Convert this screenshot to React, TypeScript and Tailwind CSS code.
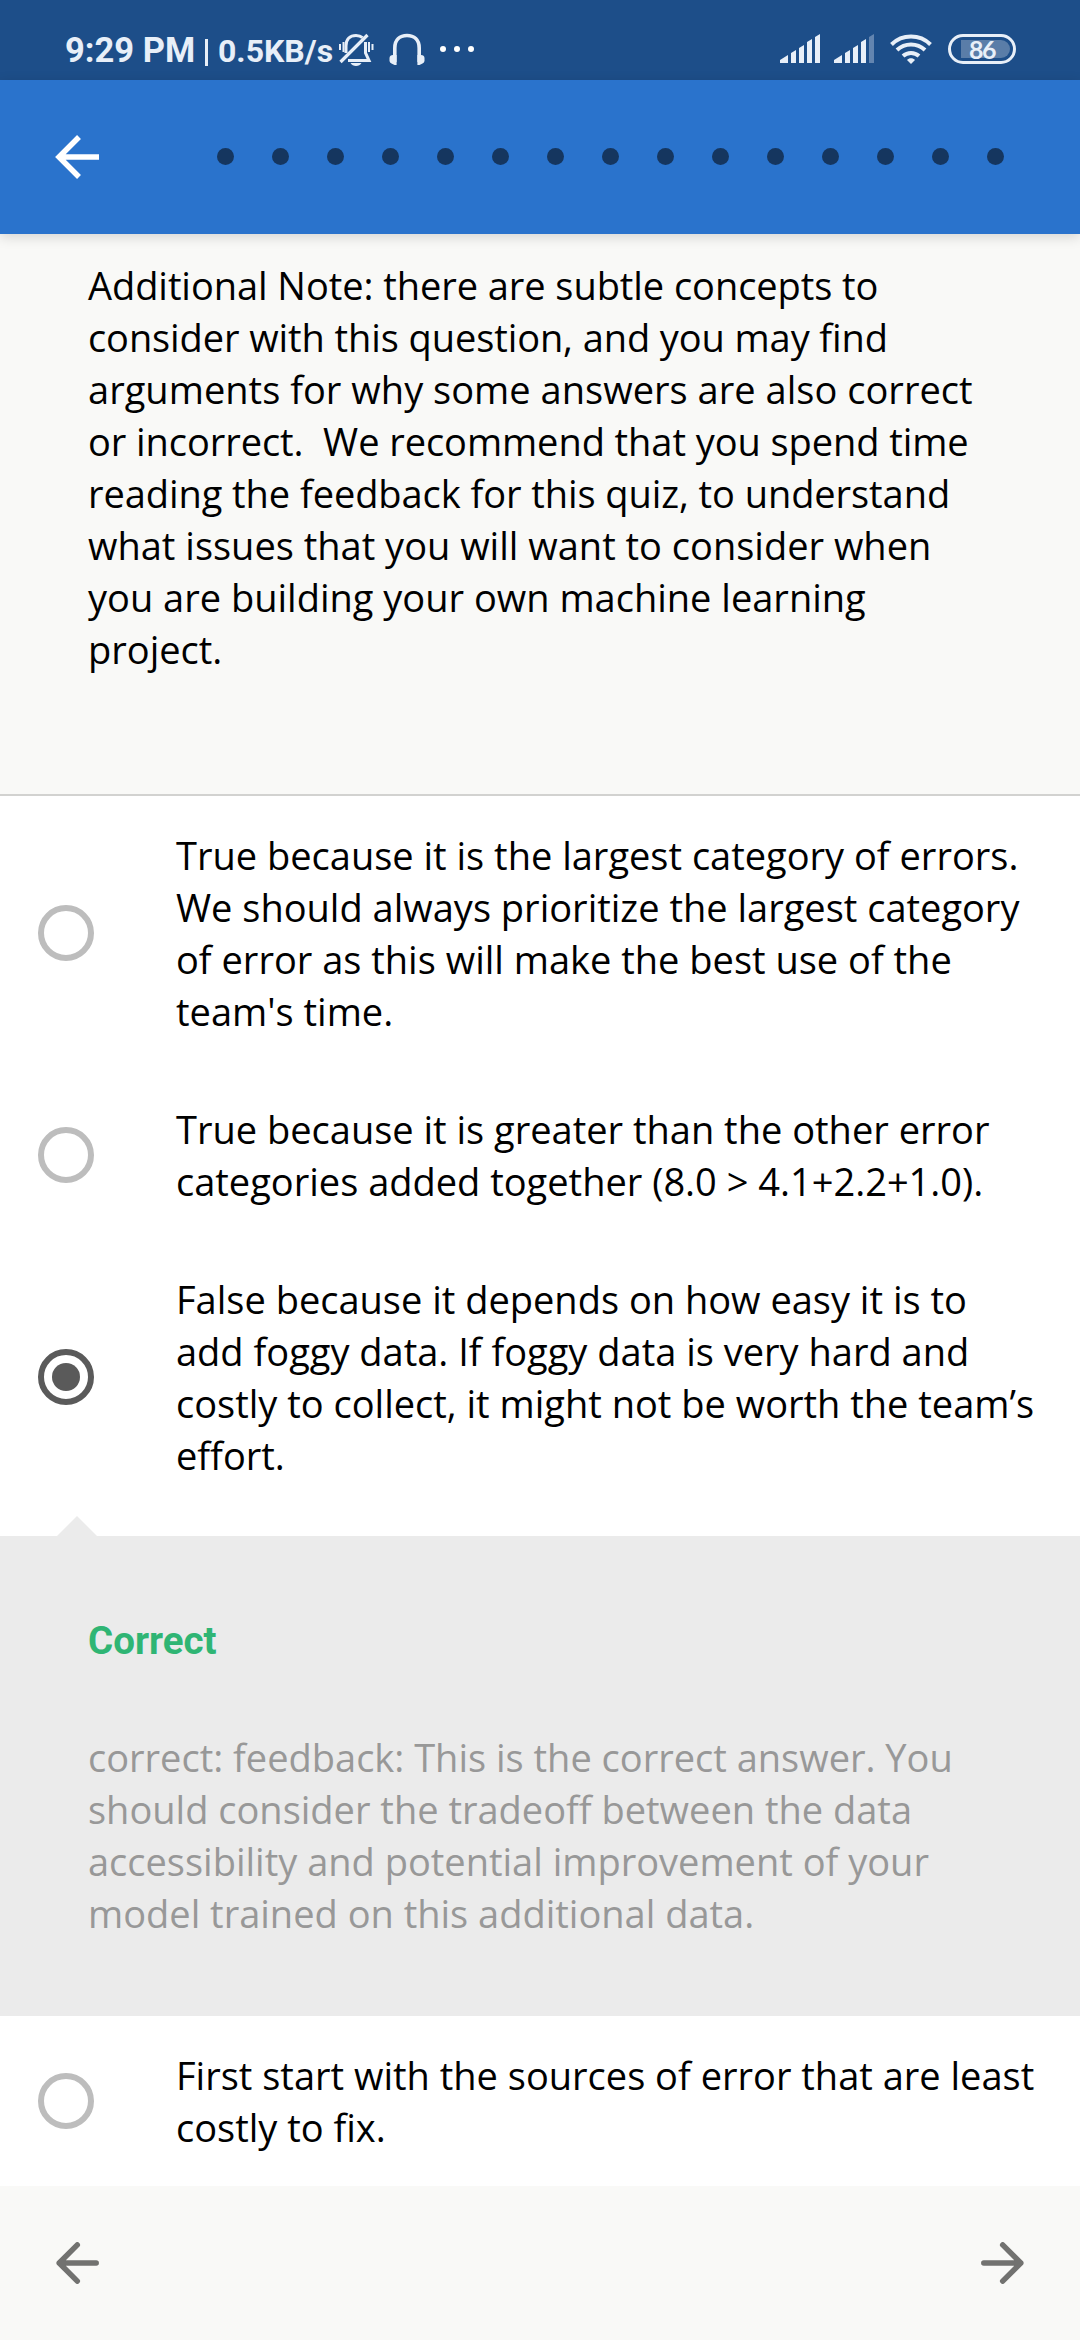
import React from "react";

const dots = Array.from({ length: 15 });

function Radio({ checked = false }: { checked?: boolean }) {
  return (
    <div
      className={
        checked
          ? "flex size-[56px] shrink-0 items-center justify-center rounded-full border-[6px] border-[#5a5a5a]"
          : "size-[56px] shrink-0 rounded-full border-[6px] border-[#bdbdbd]"
      }
    >
      {checked && <div className="size-[28px] rounded-full bg-[#5a5a5a]" />}
    </div>
  );
}

function Option({ lines, checked }: { lines: string[]; checked?: boolean }) {
  return (
    <div className="flex items-center py-[33px] pl-[38px]">
      <Radio checked={checked} />
      <div className="ml-[82px] whitespace-pre">
        {lines.map((l) => (
          <p key={l}>{l}</p>
        ))}
      </div>
    </div>
  );
}

function StatusBar() {
  return (
    <div className="flex h-[80px] items-start bg-[#1d4e89] pl-[65px] font-['Roboto'] text-[#e8eff8]">
      <div className="mt-[29px] flex h-[42px] items-center whitespace-pre font-bold">
        <span className="w-[131px] text-[34.500px]">9:29 PM</span>
        <span className="mt-[4px] ml-[9px] h-[27px] w-[3px] bg-[#e8eff8]" />
        <span className="mt-[1px] ml-[10px] w-[113px] text-[32px]">0.5KB/s</span>
      </div>
      <svg className="mt-[32px] ml-[7px]" width="36" height="36" viewBox="0 0 36 36" fill="none" stroke="#e8eff8" strokeWidth="3">
        <path d="M8 21V14C8 7 12 3.500 18 3.500c2.600 0 5 .8 6.500 2.200M27.500 10V21l3.500 7.500H10" />
        <path d="M2.500 30 29.500 3" strokeWidth="3.200" />
        <path d="M2 12v6M5.500 10v10M31 10v10M34.500 12v6" strokeWidth="2" />
        <path d="M12.500 31h11c-2 4-9 4-11 0z" fill="#e8eff8" stroke="none" />
      </svg>
      <svg className="mt-[32px] ml-[15px]" width="38" height="36" viewBox="0 0 38 36" fill="none" stroke="#e8eff8" strokeWidth="3.600">
        <path d="M5.800 30V16C5.800 7.500 11 3.500 18 3.500S30.200 7.500 30.200 16V30" />
        <path d="M4 23h3.600V33H5.500l-3-1.500a3 3 0 0 1-2-2.500V26c0-2 1.500-3 3.500-3zM32 23h-3.600V33h2.100l3-1.500a3 3 0 0 0 2-2.500V26c0-2-1.500-3-3.500-3z" fill="#e8eff8" stroke="none" />
      </svg>
      <div className="mt-[46px] ml-[13px] flex gap-[8px]">
        <i className="size-[6px] rounded-full bg-white" />
        <i className="size-[6px] rounded-full bg-white" />
        <i className="size-[6px] rounded-full bg-white" />
      </div>
      <svg className="mt-[34px] ml-auto" width="40" height="29" viewBox="0 0 40 29" fill="#e8eff8">
        <path d="M0 29v-3l8-5v8zM11 29V19l5-3v13zM19 29V14l5-3v18zM27 29V8l5-3v24zM35 29V3l5-3v29z" />
      </svg>
      <svg className="mt-[34px] ml-[14px]" width="40" height="29" viewBox="0 0 40 29" fill="#e8eff8">
        <path d="M0 29v-3l8-5v8zM11 29V19l5-3v13zM19 29V14l5-3v18zM27 29V8l5-3v24z" />
        <path d="M35 29V3l5-3v29z" opacity="0.350" />
      </svg>
      <svg className="mt-[33px] ml-[16px]" width="42" height="32" viewBox="0 0 42 32" fill="none" stroke="#e8eff8" strokeWidth="4">
        <path d="M1.500 11.500a28 28 0 0 1 39 0M7 17a20.500 20.500 0 0 1 28 0M13 23a12 12 0 0 1 16 0" />
        <path d="M17 27c2-2.500 6-2.500 8 0l-4 4z" fill="#e8eff8" stroke="none" />
      </svg>
      <div className="mt-[34px] mr-[64px] ml-[16px] flex h-[30px] w-[68px] rounded-full border-[3px] border-[#e8eff8] p-[3px] pl-[10px]">
        <div className="flex h-[18px] w-[49px] items-center rounded-r-full rounded-l-[2px] bg-[#5a7da8] pl-[8px] font-['Lato'] text-[25px] font-bold tracking-[-1.500px]">
          <span className="leading-none">86</span>
        </div>
      </div>
    </div>
  );
}

function BackArrow() {
  return (
    <svg width="44" height="44" viewBox="0 0 44 44" fill="none" stroke="#fff" strokeWidth="5.500">
      <path d="M24 2 4 22l20 20M4 22h40" />
    </svg>
  );
}

function NavArrow({ flip = false }: { flip?: boolean }) {
  return (
    <svg className={flip ? "-scale-x-100" : ""} width="43" height="42" viewBox="0 0 43 42" fill="none" stroke="#727270" strokeWidth="5.500" strokeLinecap="round" strokeLinejoin="round">
      <path d="M21.300 2.900 3.200 21l18.100 18.100M3.200 21h37" />
    </svg>
  );
}

export default function App() {
  return (
    <div className="flex h-[2340px] w-[1080px] flex-col overflow-hidden bg-white font-['Open_Sans',sans-serif] text-[38px] leading-[52px] text-black">
      <StatusBar />
      <header className="z-10 flex h-[154px] items-center bg-[#2a73cc] pl-[55px] shadow-[0_3px_12px_rgba(0,0,0,0.15)]">
        <BackArrow />
        <div className="-mt-px ml-[118px] flex gap-[38px]">
          {dots.map((_, i) => (
            <div key={i} className="size-[17px] rounded-full bg-[#15365f]" />
          ))}
        </div>
      </header>
      <section className="h-[562px] border-b-2 border-[#d2d2d0] bg-[#f9f9f7] pt-[25px] pl-[88px] whitespace-pre">
        <p className="tracking-[-0.060px]">Additional Note: there are subtle concepts to</p>
        <p className="tracking-[-0.090px]">consider with this question, and you may find</p>
        <p className="tracking-[0.025px]">arguments for why some answers are also correct</p>
        <p className="tracking-[-0.065px]">or incorrect.  We recommend that you spend time</p>
        <p className="tracking-[-0.065px]">reading the feedback for this quiz, to understand</p>
        <p>what issues that you will want to consider when</p>
        <p>you are building your own machine learning</p>
        <p>project.</p>
      </section>
      <main>
        <Option
          lines={[
            "True because it is the largest category of errors.",
            "We should always prioritize the largest category",
            "of error as this will make the best use of the",
            "team's time.",
          ]}
        />
        <Option
          lines={[
            "True because it is greater than the other error",
            "categories added together (8.0 > 4.1+2.2+1.0).",
          ]}
        />
        <Option
          checked
          lines={[
            "False because it depends on how easy it is to",
            "add foggy data. If foggy data is very hard and",
            "costly to collect, it might not be worth the team’s",
            "effort.",
          ]}
        />
        <div className="flex h-[22px] items-end pl-[57px]">
          <div className="h-[20px] w-[40px] bg-[#ebebeb] [clip-path:polygon(50%_0,100%_100%,0_100%)]" />
        </div>
        <div className="h-[480px] bg-[#ebebeb] pt-[79px] pl-[88px]">
          <h2 className="font-['Roboto'] text-[38.500px] font-bold text-[#2fb574]">Correct</h2>
          <div className="mt-[64px] whitespace-pre text-[#989898]">
            <p>correct: feedback: This is the correct answer. You</p>
            <p>should consider the tradeoff between the data</p>
            <p>accessibility and potential improvement of your</p>
            <p>model trained on this additional data.</p>
          </div>
        </div>
        <Option lines={["First start with the sources of error that are least", "costly to fix."]} />
      </main>
      <footer className="flex h-[154px] items-center justify-between bg-[#f9f9f7] px-[56px]">
        <NavArrow />
        <NavArrow flip />
      </footer>
    </div>
  );
}
